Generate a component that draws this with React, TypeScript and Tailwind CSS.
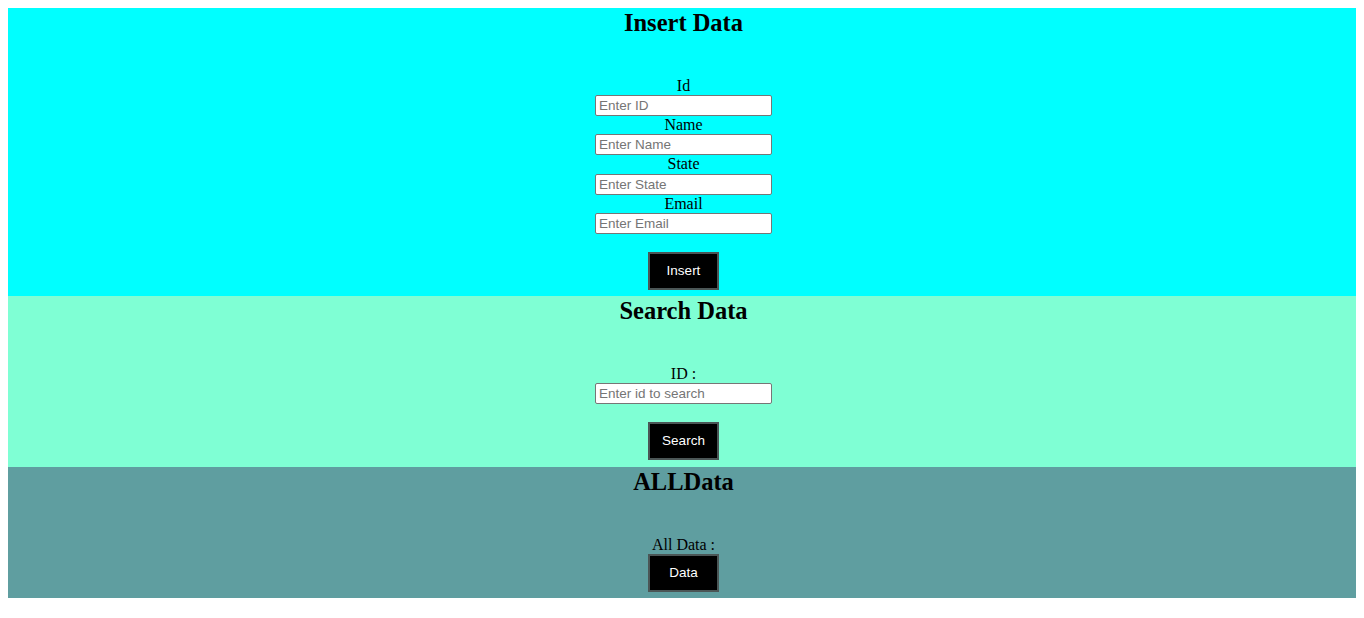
import React from 'react';

const serif = "font-['Liberation_Serif','Times_New_Roman',serif]";
const sans = "font-['Liberation_Sans',Arial,sans-serif]";

const Heading: React.FC<{ children: React.ReactNode }> = ({ children }) => (
  <h2 className={`${serif} text-[24.5px] font-bold leading-[29px] text-black text-center`}>{children}</h2>
);

const Label: React.FC<{ children: React.ReactNode }> = ({ children }) => (
  <label className={`${serif} block text-[16px] leading-[18.4px] text-black text-center`}>{children}</label>
);

const Field: React.FC<{ placeholder: string }> = ({ placeholder }) => (
  <input
    type="text"
    placeholder={placeholder}
    className={`${sans} block w-[177px] h-[21px] px-[3px] text-[13.5px] bg-white border border-[#767676] rounded-[2px] placeholder:text-[#757575] outline-none`}
  />
);

const Btn: React.FC<{ children: React.ReactNode }> = ({ children }) => (
  <button
    className={`${sans} block w-[71px] h-[38px] bg-black text-white text-[13.5px] border-2 border-[#4b5656]`}
  >
    {children}
  </button>
);

export default function App() {
  return (
    <div className="bg-white min-h-[618px] p-[8px]">
      <section className="bg-[#00ffff] h-[288px] pl-[3px] flex flex-col items-center">
        <Heading>Insert Data</Heading>
        <div className="mt-[39.5px] flex flex-col items-center">
          <Label>Id</Label>
          <Field placeholder="Enter ID" />
          <Label>Name</Label>
          <Field placeholder="Enter Name" />
          <Label>State</Label>
          <Field placeholder="Enter State" />
          <Label>Email</Label>
          <Field placeholder="Enter Email" />
        </div>
        <div className="mt-[18px]">
          <Btn>Insert</Btn>
        </div>
      </section>

      <section className="bg-[#7fffd4] h-[171px] pl-[3px] flex flex-col items-center">
        <Heading>Search Data</Heading>
        <div className="mt-[39.5px] flex flex-col items-center">
          <Label>ID :</Label>
          <Field placeholder="Enter id to search" />
        </div>
        <div className="mt-[18px]">
          <Btn>Search</Btn>
        </div>
      </section>

      <section className="bg-[#5f9ea0] h-[131px] pl-[3px] flex flex-col items-center">
        <Heading>ALLData</Heading>
        <div className="mt-[40px] flex flex-col items-center">
          <Label>All Data :</Label>
          <Btn>Data</Btn>
        </div>
      </section>
    </div>
  );
}
